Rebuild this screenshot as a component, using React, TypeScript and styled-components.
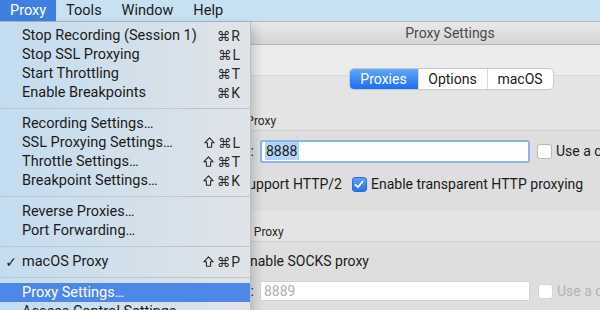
import styled, { createGlobalStyle, css } from 'styled-components';

const GlobalStyle = createGlobalStyle`
  html, body {
    margin: 0;
    padding: 0;
    overflow: hidden;
    background: #e4e4e4;
  }
  * { box-sizing: border-box; }
`;

const FONT = `Roboto, "Liberation Sans", "DejaVu Sans", sans-serif`;

const Screen = styled.div`
  position: relative;
  width: 600px;
  height: 310px;
  overflow: hidden;
  font-family: ${FONT};
  color: #1b1b1b;
`;

const MenuBar = styled.div`
  display: flex;
  height: 22px;
  background: #c7e0f2;
  border-bottom: 1px solid #a9b9c6;
  font-size: 14.5px;
`;

const MenuTitle = styled.div<{ $open?: boolean }>`
  display: flex;
  align-items: center;
  padding: 0 10px;
  ${(p) =>
    p.$open &&
    css`
      background: #3f7fe2;
      color: #fff;
    `}
`;

const Window = styled.div`
  width: 600px;
  margin-left: 150px;
  display: flex;
  flex-direction: column;
`;

const TitleBar = styled.div`
  height: 23px;
  display: flex;
  align-items: center;
  justify-content: center;
  background: linear-gradient(#e9e9e9, #d4d4d4);
  border-bottom: 1px solid #b8b8b8;
  font-size: 14px;
  color: #4a4a4a;
`;

const Toolbar = styled.div`
  height: 31px;
  background: #ececec;
  display: flex;
  justify-content: center;
  padding: 24px 0 0 0;
  border-bottom: 1px solid #d8d8d8;
`;

const Segmented = styled.div`
  position: relative;
  z-index: 1;
  display: flex;
  height: 20px;
  margin-left: 2px;
  border-radius: 4px;
  background: #fff;
  box-shadow: 0 0 0 1px #c9c9c9, 0 1px 1px rgba(0, 0, 0, 0.08);
  font-size: 14px;
`;

const Segment = styled.div<{ $active?: boolean; $w: number }>`
  width: ${(p) => p.$w}px;
  display: flex;
  align-items: center;
  justify-content: center;
  border-left: 1px solid #dcdcdc;
  &:first-child {
    border-left: none;
    border-radius: 4px 0 0 4px;
  }
  &:last-child {
    border-radius: 0 4px 4px 0;
  }
  ${(p) =>
    p.$active &&
    css`
      background: linear-gradient(#64a6fb, #1a6ef5);
      color: #fff;
    `}
`;

const TabBody = styled.div`
  background: #e4e4e4;
  padding-top: 35px;
  display: flex;
  flex-direction: column;
`;

const GroupLabel = styled.div`
  height: 19px;
  padding-left: 63px;
  font-size: 12px;
  color: #2a2a2a;
  display: flex;
  align-items: flex-end;
  padding-bottom: 2px;
`;

const GroupBox = styled.div<{ $h: number }>`
  height: ${(p) => p.$h}px;
  margin-left: 48px;
  background: #dedede;
  border-top: 1px solid #d0d0d0;
  display: flex;
  flex-direction: column;
  padding-top: 8px;
  font-size: 14px;
`;

const GroupGap = styled.div`
  height: 11px;
`;

const PortRow = styled.div`
  display: flex;
  align-items: center;
  height: 24px;
`;

const PortLabel = styled.div`
  width: 62px;
  padding-right: 6px;
  text-align: right;
  color: #1b1b1b;
`;

const Field = styled.div<{ $focus?: boolean; $disabled?: boolean }>`
  width: 270px;
  height: ${(p) => (p.$focus ? 23 : 20)}px;
  background: #fff;
  display: flex;
  align-items: center;
  padding-left: 3px;
  font-size: 14px;
  color: ${(p) => (p.$disabled ? '#b0b0b0' : '#1b1b1b')};
  border: 1px solid ${(p) => (p.$disabled ? '#d4d4d4' : '#c4c4c4')};
  ${(p) =>
    p.$focus &&
    css`
      border: 2px solid #8bb4ea;
      border-radius: 3px;
    `}
`;

const Selected = styled.span`
  background: #b4d3f8;
  padding: 1px 2px 1px 1px;
`;

const CheckRow = styled.div<{ $pad: number }>`
  display: flex;
  align-items: center;
  height: 22px;
  padding-left: ${(p) => p.$pad}px;
`;

const Check = styled.label<{ $disabled?: boolean; $ml?: number }>`
  display: flex;
  align-items: center;
  gap: 4px;
  margin-left: ${(p) => p.$ml ?? 0}px;
  white-space: nowrap;
  color: ${(p) => (p.$disabled ? '#b3b3b3' : '#1b1b1b')};
`;

const Box = styled.span<{ $checked?: boolean; $disabled?: boolean }>`
  width: 15px;
  height: 15px;
  border-radius: 3px;
  background: #fff;
  border: 1px solid ${(p) => (p.$disabled ? '#d6d6d6' : '#b9b9b9')};
  display: flex;
  align-items: center;
  justify-content: center;
  ${(p) =>
    p.$checked &&
    css`
      background: linear-gradient(#5fa2fb, #1f72f4);
      border-color: #2a6fd8;
    `}
`;

const Menu = styled.div`
  position: absolute;
  top: 22px;
  left: 0;
  width: 251px;
  height: 300px;
  padding-top: 4px;
  background: linear-gradient(90deg, #c3dcf0 0%, #d3e0ea 55%, #e0e4e8 100%);
  border-right: 1px solid #b9bec3;
  box-shadow: 3px 4px 10px rgba(0, 0, 0, 0.18);
  font-size: 14.5px;
  z-index: 5;
`;

const Item = styled.div<{ $active?: boolean }>`
  display: flex;
  align-items: center;
  height: 19px;
  padding: 0 10px 0 0;
  ${(p) =>
    p.$active &&
    css`
      background: #4d87e8;
      color: #fff;
    `}
`;

const Tick = styled.span`
  width: 22px;
  text-align: center;
  font-size: 14px;
  font-family: "DejaVu Sans", sans-serif;
`;

const ItemLabel = styled.span`
  flex: 1;
`;

const Keys = styled.span`
  display: flex;
  align-items: center;
  font-size: 14px;
  color: #2a2a2a;
`;

const KeyGlyph = styled.span`
  font-family: "DejaVu Sans", sans-serif;
  font-size: 13.5px;
  margin-right: 1px;
`;

const ShiftIcon = styled.svg`
  margin-right: 3px;
  margin-top: -1px;
`;

const Separator = styled.div`
  height: 12px;
  display: flex;
  align-items: center;
  &::after {
    content: '';
    flex: 1;
    height: 1px;
    background: #bfc7ce;
  }
`;

type Entry = { label?: string; shift?: boolean; key?: string; checked?: boolean; active?: boolean; sep?: boolean };

const menuItems: Entry[] = [
  { label: 'Stop Recording (Session 1)', key: 'R' },
  { label: 'Stop SSL Proxying', key: 'L' },
  { label: 'Start Throttling', key: 'T' },
  { label: 'Enable Breakpoints', key: 'K' },
  { sep: true },
  { label: 'Recording Settings…' },
  { label: 'SSL Proxying Settings…', shift: true, key: 'L' },
  { label: 'Throttle Settings…', shift: true, key: 'T' },
  { label: 'Breakpoint Settings…', shift: true, key: 'K' },
  { sep: true },
  { label: 'Reverse Proxies…' },
  { label: 'Port Forwarding…' },
  { sep: true },
  { label: 'macOS Proxy', shift: true, key: 'P', checked: true },
  { sep: true },
  { label: 'Proxy Settings…', active: true },
  { label: 'Access Control Settings…' },
];

const CheckMark = () => (
  <svg width="10" height="9" viewBox="0 0 10 9">
    <path d="M1.5 4.8 L4 7.2 L8.6 1.5" fill="none" stroke="#fff" strokeWidth="1.8" strokeLinecap="round" strokeLinejoin="round" />
  </svg>
);

const Shift = () => (
  <ShiftIcon width="11" height="11" viewBox="0 0 11 11">
    <path d="M5.5 0.8 L10.2 5.8 L7.6 5.8 L7.6 10.2 L3.4 10.2 L3.4 5.8 L0.8 5.8 Z" fill="none" stroke="#2a2a2a" strokeWidth="1.1" strokeLinejoin="round" />
  </ShiftIcon>
);

export default function App() {
  return (
    <>
      <GlobalStyle />
      <Screen>
        <MenuBar>
          <MenuTitle $open>Proxy</MenuTitle>
          <MenuTitle>Tools</MenuTitle>
          <MenuTitle>Window</MenuTitle>
          <MenuTitle>Help</MenuTitle>
        </MenuBar>

        <Window>
          <TitleBar>Proxy Settings</TitleBar>
          <Toolbar>
            <Segmented>
              <Segment $w={68} $active>Proxies</Segment>
              <Segment $w={69}>Options</Segment>
              <Segment $w={66}>macOS</Segment>
            </Segmented>
          </Toolbar>
          <TabBody>
            <GroupLabel>HTTP Proxy</GroupLabel>
            <GroupBox $h={81}>
              <PortRow>
                <PortLabel>Port:</PortLabel>
                <Field $focus>
                  <Selected>8888</Selected>
                </Field>
                <Check $ml={7}>
                  <Box />
                  Use a custom port
                </Check>
              </PortRow>
              <CheckRow $pad={23} style={{ marginTop: 10 }}>
                <Check>
                  <Box />
                  Support HTTP/2
                </Check>
                <Check $ml={10}>
                  <Box $checked>
                    <CheckMark />
                  </Box>
                  Enable transparent HTTP proxying
                </Check>
              </CheckRow>
            </GroupBox>
            <GroupGap />
            <GroupLabel>SOCKS Proxy</GroupLabel>
            <GroupBox $h={80}>
              <CheckRow $pad={25}>
                <Check>
                  <Box />
                  Enable SOCKS proxy
                </Check>
              </CheckRow>
              <PortRow style={{ marginTop: 7 }}>
                <PortLabel>Port:</PortLabel>
                <Field $disabled>8889</Field>
                <Check $ml={8} $disabled>
                  <Box $disabled />
                  Use a custom port
                </Check>
              </PortRow>
            </GroupBox>
          </TabBody>
        </Window>

        <Menu>
          {menuItems.map((m, i) =>
            m.sep ? (
              <Separator key={i} />
            ) : (
              <Item key={i} $active={m.active}>
                <Tick>{m.checked ? '✓' : ''}</Tick>
                <ItemLabel>{m.label}</ItemLabel>
                {m.key && (
                  <Keys>
                    {m.shift && <Shift />}
                    <KeyGlyph>⌘</KeyGlyph>
                    <span>{m.key}</span>
                  </Keys>
                )}
              </Item>
            )
          )}
        </Menu>
      </Screen>
    </>
  );
}
